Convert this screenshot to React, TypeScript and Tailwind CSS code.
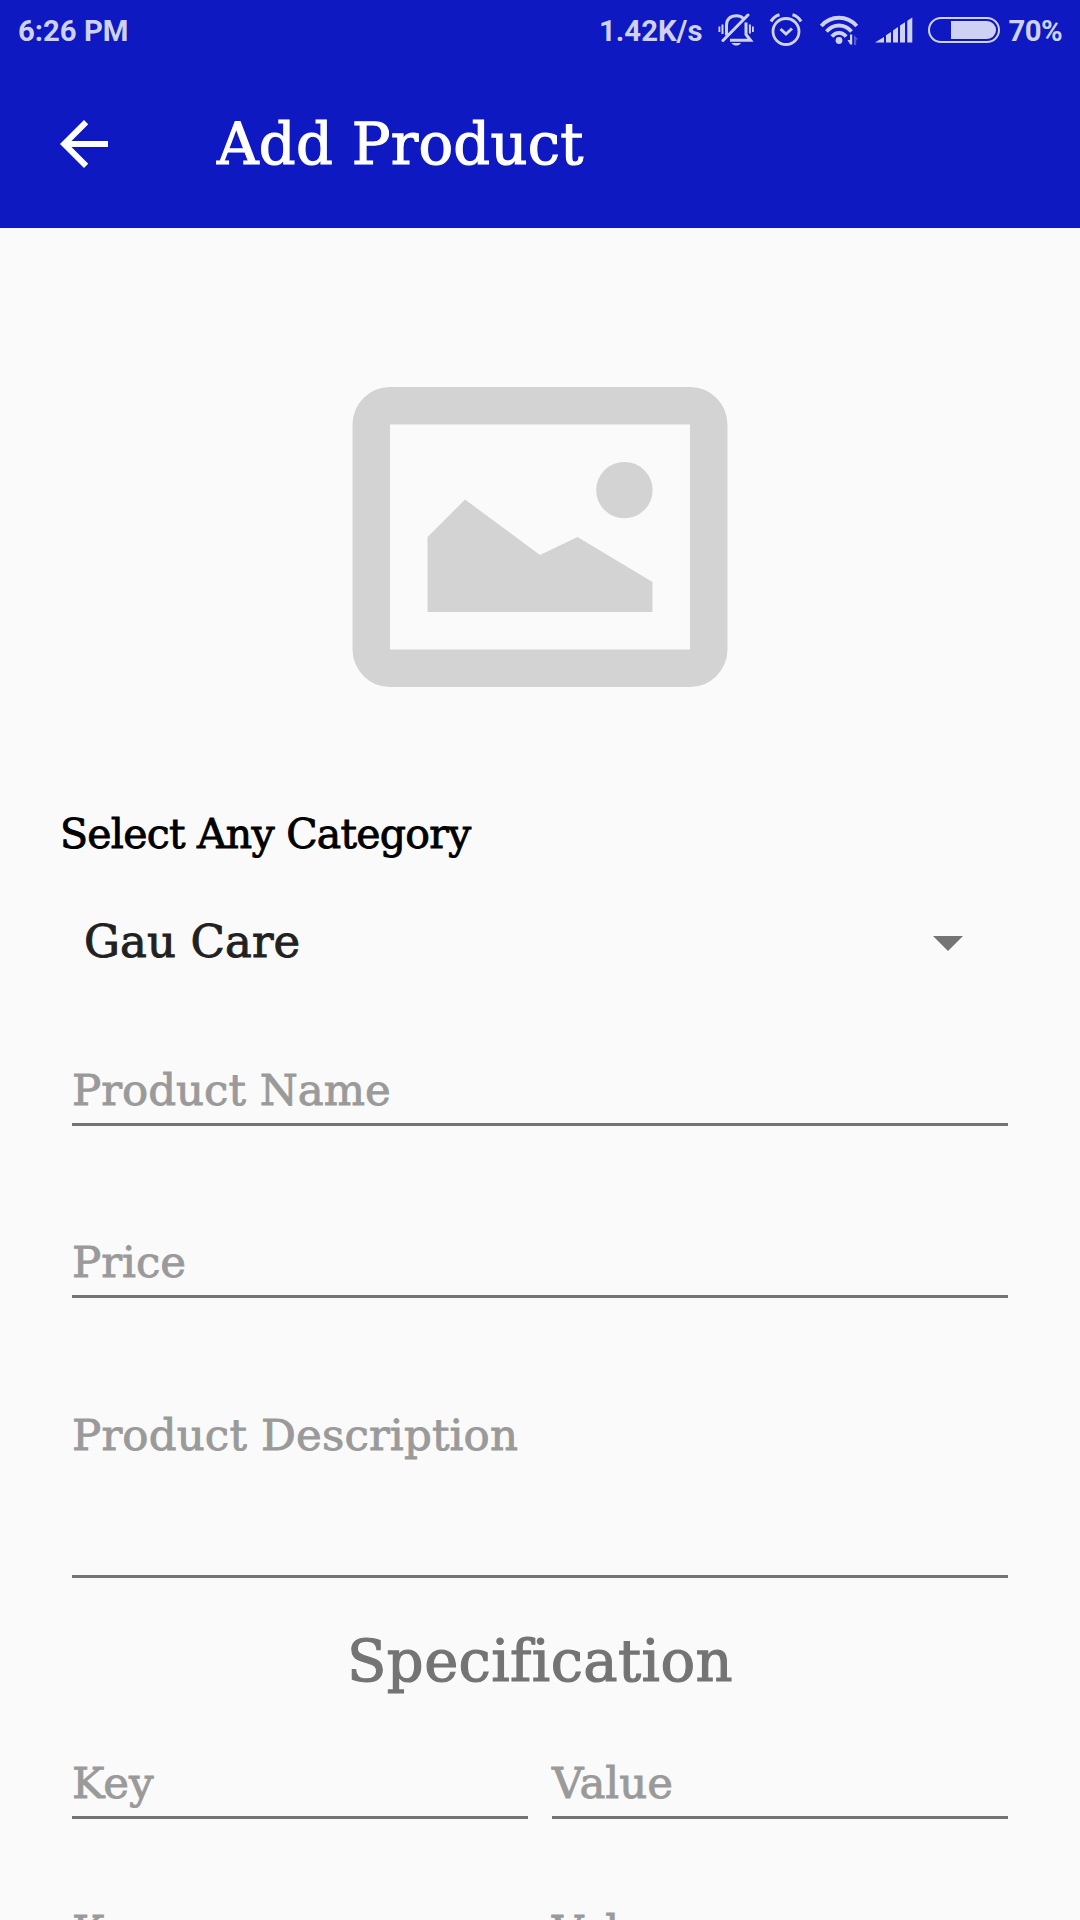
import clsx from "clsx";

const specRows = ["mt-[67px]", "mt-[88px]"];

function MutedBellIcon() {
  return (
    <svg className="h-[34px] w-9" viewBox="0 0 36 34" fill="none" stroke="currentColor" strokeWidth="3">
      <path d="M8.500 22.500V12.500C8.500 6 12.500 2.800 18.500 2.800c2.800 0 5 .8 6.800 2.600" />
      <path d="M28 9.500v12l4.500 5.700H12" />
      <path d="M5 27.500 30 2" strokeLinecap="round" />
      <path d="M4.500 11.500v9.500M31.900 11.500v9" strokeWidth="2" />
      <path d="M1.400 13.500v5.500M34.900 13.500v5.500" strokeWidth="1.800" />
      <path d="M13.500 30h9.500c-1.200 2-3 2.500-4.700 2.500s-3.600-.5-4.800-2.500z" fill="currentColor" stroke="none" />
    </svg>
  );
}

function AlarmIcon() {
  return (
    <svg className="h-[34px] w-[34px]" viewBox="0 0 34 34" fill="none" stroke="currentColor" strokeWidth="2.800">
      <circle cx="17" cy="18.500" r="13" />
      <path d="M11.500 16l5.500 5 6-5.500" strokeWidth="3" />
      <path d="M2 8.500C4 5 7 2.600 10.500 1.700M32 8.500c-2-3.500-5-5.900-8.500-6.800" strokeWidth="3.200" />
    </svg>
  );
}

function WifiIcon() {
  return (
    <svg className="h-8 w-10" viewBox="0 0 40 32" fill="none" stroke="currentColor" strokeWidth="3.800">
      <path d="M2.200 12C12 1 28 1 37.800 12" />
      <path d="M7.500 17.500C14.500 9.500 25.500 9.500 32.500 17.500" />
      <path d="M12.800 22.500c4.200-4.800 10.200-4.800 14.400 0" />
      <circle cx="20" cy="26.500" r="3.400" fill="currentColor" stroke="none" />
      <path d="M33.200 20.500v10h-2L28.500 26h2.500v-5.500z" fill="currentColor" stroke="none" />
      <path d="M35 31V21l4.200 4.500h-2V31z" fill="currentColor" stroke="none" opacity=".35" />
    </svg>
  );
}

function SignalIcon() {
  return (
    <svg className="h-[26px] w-[38px]" viewBox="0 0 38 26" fill="currentColor">
      <path d="M0 25.500 9 20v5.500z" />
      <path d="M11 18.300 16 15v10.500h-5z" />
      <path d="M18 13.500 23 10v15.500h-5z" />
      <path d="M25 8.500 30 5.200v20.300h-5z" />
      <path d="M32.300 3.800 37.300.5v25h-5z" />
    </svg>
  );
}

function BatteryIcon() {
  return (
    <svg className="h-[26px] w-[72px]" viewBox="0 0 72 26">
      <rect x="1" y="1" width="70" height="24" rx="12" fill="none" stroke="currentColor" strokeWidth="2" />
      <path d="M23 4h36a9 9 0 0 1 0 18H23z" fill="currentColor" />
    </svg>
  );
}

function StatusBar() {
  return (
    <div className="flex h-15 items-center pr-[18px] pl-[18px] font-['Roboto',sans-serif] text-[29.300px] leading-none font-bold text-[#cfd1f3]">
      <span className="pt-[3px]">6:26 PM</span>
      <div className="ml-auto flex items-center">
        <span className="pt-[3px]">1.42K/s</span>
        <div className="ml-[15px]">
          <MutedBellIcon />
        </div>
        <div className="ml-[15px]">
          <AlarmIcon />
        </div>
        <div className="ml-4">
          <WifiIcon />
        </div>
        <div className="ml-4">
          <SignalIcon />
        </div>
        <div className="ml-[15px]">
          <BatteryIcon />
        </div>
        <span className="ml-[9px] pt-[3px] tracking-[-0.600px]">70%</span>
      </div>
    </div>
  );
}

type FieldProps = { label: string; className?: string };

function Field({ label, className }: FieldProps) {
  return (
    <div
      className={clsx(
        "border-b-3 border-[#747474] text-[43.500px] leading-[49px] text-[#9a9a9a] [-webkit-text-stroke:0.900px]",
        className,
      )}
    >
      {label}
    </div>
  );
}

export default function App() {
  return (
    <div className="h-[1920px] w-[1080px] overflow-hidden bg-[#fafafa] font-['DejaVu_Serif',serif]">
      <header className="h-[228px] bg-[#0e19c1]">
        <StatusBar />
        <div className="flex h-[168px] items-center pl-12 text-white">
          <svg className="size-[72px]" viewBox="0 0 24 24" fill="currentColor">
            <path d="M20 11H7.830l5.590-5.590L12 4l-8 8 8 8 1.410-1.410L7.830 13H20z" />
          </svg>
          <h1 className="ml-[97px] pt-0.5 text-[57.600px] leading-[60px] tracking-[0.250px] [-webkit-text-stroke:1.200px]">
            Add Product
          </h1>
        </div>
      </header>

      <main className="px-15">
        <svg className="mx-auto mt-[159px] h-[300px] w-[376px]" viewBox="-0.500 0 376 300" fill="#d3d3d3">
          <path
            fillRule="evenodd"
            d="M37.500 0h300A37.500 37.500 0 0 1 375 37.500v225a37.500 37.500 0 0 1-37.500 37.500h-300A37.500 37.500 0 0 1 0 262.500v-225A37.500 37.500 0 0 1 37.500 0zM37.500 37.500v225h300v-225z"
          />
          <path d="M75 150l37.500-37.500L187.500 168l37.500-18 75 45v30H75z" />
          <circle cx="271.900" cy="103.100" r="28.200" />
        </svg>

        <p className="mt-[122px] text-[41px] leading-[50px] tracking-[-0.750px] text-black [-webkit-text-stroke:0.900px]">
          Select Any Category
        </p>

        <div className="mt-[54px] flex h-[60px] items-center justify-between pr-[57px] pl-6 text-[45px] leading-[60px] text-[#212121]">
          <span className="pb-0.5 tracking-[0.100px] [-webkit-text-stroke:0.900px]">Gau Care</span>
          <svg className="h-[15px] w-[30px]" viewBox="0 0 30 15" fill="#747474">
            <path d="M0 0h30L15 15z" />
          </svg>
        </div>

        <div className="px-3">
          <Field label="Product Name" className="mt-[93px] h-[60px]" />
          <Field label="Price" className="mt-[112px] h-[60px]" />
          <Field label="Product Description" className="mt-[113px] h-[167px] tracking-[0.150px]" />
        </div>

        <h2 className="mt-[54px] text-center text-[57.600px] leading-[60px] tracking-[0.400px] text-[#747474] [-webkit-text-stroke:1.200px]">
          Specification
        </h2>

        {specRows.map((spacing) => (
          <div key={spacing} className={clsx("grid grid-cols-2 gap-6 px-3", spacing)}>
            <Field label="Key" className="h-[60px]" />
            <Field label="Value" className="h-[60px]" />
          </div>
        ))}
      </main>
    </div>
  );
}
